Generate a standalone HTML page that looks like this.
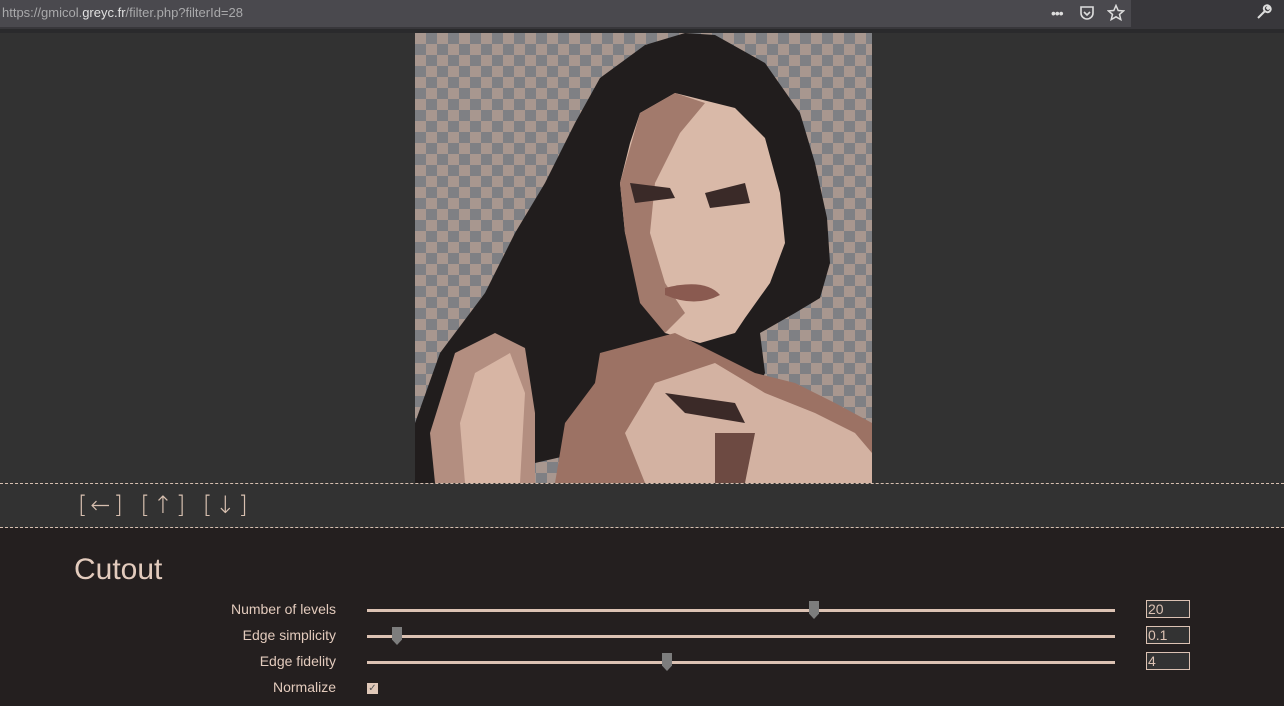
<!DOCTYPE html>
<html><head><meta charset="utf-8"><style>
*{margin:0;padding:0;box-sizing:border-box}
body{width:1284px;height:706px;overflow:hidden;background:#323232;font-family:"Liberation Sans",sans-serif;position:relative}
.top{position:absolute;left:0;top:0;width:1284px;height:29px;background:#38373b}
.url{position:absolute;left:0;top:0;width:1131px;height:27px;background:#4a494e;color:#a9a9ab;font-size:13px;line-height:26px;padding-left:2px}
.url b{color:#e0e0e0;font-weight:normal}
.strip{position:absolute;left:0;top:29px;width:1284px;height:4px;background:#2a2a2c}
.img{position:absolute;left:415px;top:33px;width:457px;height:450px}
.dash{position:absolute;left:0;width:1284px;border-top:1px dashed #d6bfb0}
.nav{position:absolute;left:78px;top:491px;color:#d8c0b0;font-size:24px;letter-spacing:3px;word-spacing:4px;font-family:"DejaVu Sans",sans-serif;font-weight:200}
.panel{position:absolute;left:0;top:528px;width:1284px;height:178px;background:#241f1f}
h1{position:absolute;left:74px;top:553px;font-weight:normal;font-size:30px;color:#e3cbbd}
.lbl{position:absolute;right:948px;color:#e3cbbd;font-size:14px}
.track{position:absolute;left:367px;width:748px;height:3px;background:#dcc2b3}
.thumb{position:absolute;width:10px;height:18px;background:#7d7d7d;clip-path:polygon(0 0,100% 0,100% 70%,50% 100%,0 70%)}
.box{position:absolute;left:1146px;width:44px;height:18px;border:1px solid #dcc2b3;color:#dcc2b3;background:#333;font-size:14px;line-height:16px;padding-left:1px}
.chk{position:absolute;left:367px;top:683px;width:11px;height:11px;background:#e0c8b8;color:#555;font-size:10px;line-height:11px;text-align:center}
</style></head><body>
<div class="top"><div class="url">https://gmicol.<b>greyc.fr</b>/filter.php?filterId=28</div>
<div style="position:absolute;left:1051px;top:5px;color:#ddd;font-size:14px;letter-spacing:-1px">•••</div>
<svg style="position:absolute;left:1079px;top:5px" width="16" height="16" viewBox="0 0 16 16"><path d="M2 2h12v6a6 6 0 0 1-12 0z" fill="none" stroke="#ddd" stroke-width="1.6"/><path d="M5 7l3 3 3-3" fill="none" stroke="#ddd" stroke-width="1.6"/></svg>
<svg style="position:absolute;left:1107px;top:4px" width="18" height="18" viewBox="0 0 18 18"><path d="M9 1.5l2.2 5 5.3.4-4 3.5 1.3 5.2L9 12.8l-4.8 2.8 1.3-5.2-4-3.5 5.3-.4z" fill="none" stroke="#ddd" stroke-width="1.5"/></svg>
<svg style="position:absolute;left:1256px;top:4px" width="16" height="16" viewBox="0 0 16 16"><path d="M2 14l7-7M9 7a3 3 0 0 1 4-5l-2 2 1 1 2-2a3 3 0 0 1-5 4" fill="none" stroke="#ddd" stroke-width="2"/></svg>
</div>
<div class="strip"></div>
<svg class="img" viewBox="0 0 457 450">
<defs><pattern id="ck" width="22" height="22" patternUnits="userSpaceOnUse"><rect width="22" height="22" fill="#7f8084"/><rect width="11" height="11" fill="#a8978f"/><rect x="11" y="11" width="11" height="11" fill="#a8978f"/></pattern></defs>
<rect width="457" height="450" fill="url(#ck)"/>
<path d="M270 0L300 2L350 30L385 80L400 130L412 185L415 230L405 265L380 280L345 300L350 340L330 380L250 400L120 430L100 450L0 450L0 390L25 320L70 260L100 200L130 150L160 90L185 45L230 12Z" fill="#211d1d"/>
<path d="M225 80L260 60L320 75L350 105L365 160L370 210L355 250L330 285L320 300L285 310L250 300L230 260L210 200L205 150L215 110Z" fill="#d9b9a8"/>
<path d="M225 80L260 60L290 70L265 100L240 150L235 200L250 250L270 280L250 300L225 270L210 200L205 150Z" fill="#a27a6c"/>
<path d="M215 150L255 155L260 165L220 170Z M290 160L330 150L335 170L295 175Z" fill="#3a2a28"/>
<path d="M250 255Q290 245 305 262Q280 275 250 262Z" fill="#8a5a50"/>
<path d="M40 320L80 300L110 315L120 380L120 450L20 450L15 400Z" fill="#b38e80"/>
<path d="M60 340L95 320L110 360L105 450L50 450L45 390Z" fill="#d7b5a4"/>
<path d="M185 320L260 300L300 320L340 340L380 350L420 370L457 390L457 450L140 450L150 390L180 350Z" fill="#9c7264"/>
<path d="M240 350L300 330L350 360L400 380L440 400L457 420L457 450L230 450L210 400Z" fill="#d3b2a2"/>
<path d="M250 360L320 370L330 390L270 380Z" fill="#3b2a28"/>
<path d="M300 400L340 400L330 450L300 450Z" fill="#6d4a42"/>
</svg>
<div class="dash" style="top:483px"></div>
<div class="nav">[←] [↑] [↓]</div>
<div class="dash" style="top:527px"></div>
<div class="panel"></div>
<h1>Cutout</h1>
<div class="lbl" style="top:601px">Number of levels</div>
<div class="lbl" style="top:627px">Edge simplicity</div>
<div class="lbl" style="top:653px">Edge fidelity</div>
<div class="lbl" style="top:679px">Normalize</div>
<div class="track" style="top:609px"></div><div class="thumb" style="left:809px;top:601px"></div>
<div class="track" style="top:635px"></div><div class="thumb" style="left:392px;top:627px"></div>
<div class="track" style="top:661px"></div><div class="thumb" style="left:662px;top:653px"></div>
<div class="box" style="top:600px">20</div>
<div class="box" style="top:626px">0.1</div>
<div class="box" style="top:652px">4</div>
<div class="chk">✓</div>
</body></html>
